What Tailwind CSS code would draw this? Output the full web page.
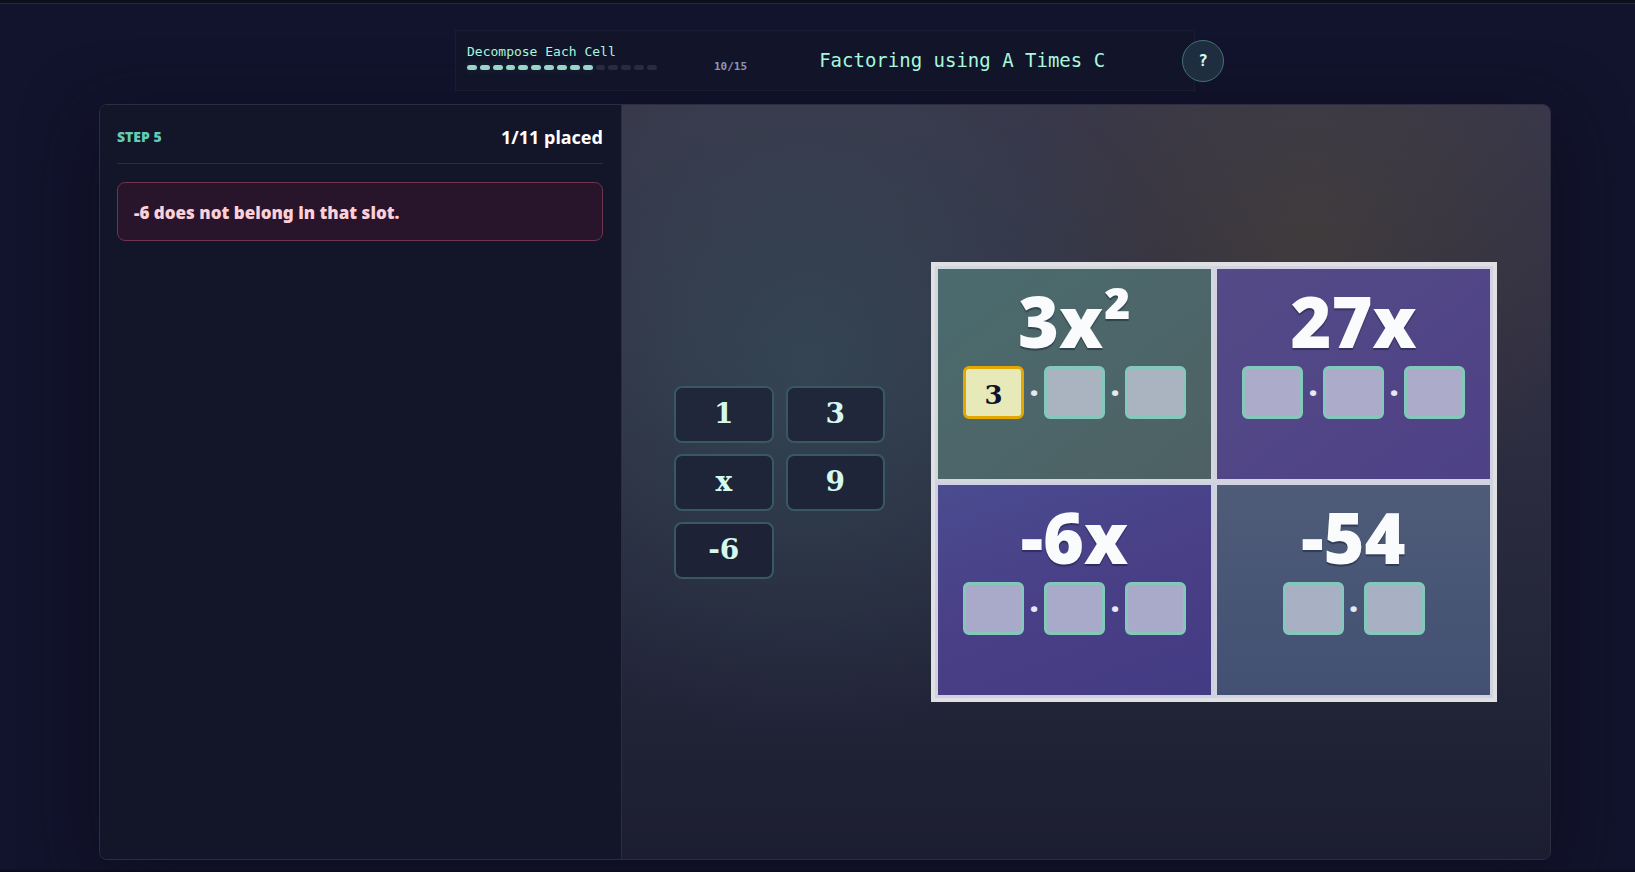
<!DOCTYPE html>
<html lang="en">

<head>
  <meta charset="UTF-8" />
  <meta name="viewport" content="width=device-width, initial-scale=1.0" />
  <title>Factoring using A Times C</title>
  <script src="https://cdn.jsdelivr.net/npm/@tailwindcss/browser@4"></script>
</head>

<body class="flex min-h-screen flex-col overflow-x-hidden bg-[#12132c] font-['Noto_Sans',sans-serif] text-white">

  <div class="h-1 border-b border-[#292a38] bg-[#0e0f1d]"></div>

  <main class="flex flex-1 flex-col pt-[26px] pr-[84px] pb-[10px] pl-[99px]">

    <header class="relative z-10 mx-auto flex h-[61px] w-[740px] items-center border border-[#1b1c31] bg-[#121429] pl-[11px] font-['DejaVu_Sans_Mono',monospace]">
      <div class="mb-1.5 flex items-end gap-[57px]">
        <div class="w-[190px]">
          <p class="text-[13px] leading-5 text-[#a7f8dd]">Decompose Each Cell</p>
          <div id="steps" class="mt-[3px] mb-1 flex gap-[3px]"></div>
        </div>
        <p class="text-[11px] leading-[14px] font-bold text-[#9095b5]">10/15</p>
      </div>
      <h1 class="ml-[72px] text-[19px] text-[#a7f8dd]">Factoring using A Times C</h1>
      <button type="button" aria-label="Help" class="absolute top-[9px] -right-[30px] h-[42px] w-[42px] rounded-full border border-[#3f7373] bg-[#1f2d40] text-base font-bold text-[#d6fbef]">?</button>
    </header>

    <div class="mt-[13px] flex flex-1 overflow-hidden rounded-lg border border-[#2c2d40] shadow-[0_18px_70px_rgba(12,12,26,0.6)]">

      <!-- step panel -->
      <aside class="w-[36%] border-r border-[#2c2d40] bg-[#131529] pr-[18px] pl-[17px]">
        <div class="flex h-[59px] items-center justify-between border-b border-[#2c2d40] pt-1.5">
          <p class="text-sm font-black text-[#63cdb5]">STEP 5</p>
          <p class="text-lg font-bold">1/11 placed</p>
        </div>
        <p role="alert" class="mt-[18px] flex h-[59px] items-center rounded-lg border border-[#6f3450] bg-[#28152c] px-4 pt-0.5 text-[17px] font-black text-[#fbd0d8]">-6 does not belong in that slot.</p>
      </aside>

      <!-- board panel -->
      <section class="flex flex-1 items-center gap-[46px] bg-[radial-gradient(circle_at_20%_35%,rgba(56,90,98,0.5),transparent_42%),radial-gradient(circle_at_74%_18%,rgba(80,70,45,0.4),transparent_32%),linear-gradient(180deg,#38374a_0%,#302f43_35%,#24263a_70%,#1c1d31_100%)] pr-[53px] pl-[52px]">

        <div class="grid w-[211px] shrink-0 grid-cols-2 gap-x-3 gap-y-[11px] font-['DejaVu_Serif',serif] text-[28px] leading-none font-bold text-[#d4f9ee]">
          <button type="button" class="h-[57px] rounded-lg border-2 border-[#37595f] bg-[#20273a]">1</button>
          <button type="button" class="h-[57px] rounded-lg border-2 border-[#37595f] bg-[#20273a]">3</button>
          <button type="button" class="h-[57px] rounded-lg border-2 border-[#37595f] bg-[#1f2539]">x</button>
          <button type="button" class="h-[57px] rounded-lg border-2 border-[#37595f] bg-[#1f2539]">9</button>
          <button type="button" class="h-[57px] rounded-lg border-2 border-[#37595f] bg-[#1d2236]">-6</button>
        </div>

        <div class="grid flex-1 grid-cols-2 border-4 border-[#dfdfe4] font-['Open_Sans',sans-serif]">
          <div class="flex h-[216px] flex-col items-center border-[3px] border-[#d0d8dc] bg-linear-to-br from-[#4a6b6e] to-[#4e6164] pt-[17px]">
            <p class="text-[70px] leading-none font-extrabold text-[#fafbfd] text-shadow-[0_2px_1px_rgba(15,23,42,0.45)]">3x²</p>
            <div class="mt-[10px] flex items-center">
              <button type="button" aria-label="Filled slot" class="h-[53px] w-[61px] rounded-md border-3 border-[#e3a700] bg-[#e7e9b8] pt-1 font-['DejaVu_Serif',serif] text-[26px] leading-none font-bold text-[#101229]">3</button>
              <span class="w-5 text-center text-3xl leading-none font-black text-[#e6e8f2]">·</span>
              <button type="button" aria-label="Empty slot" class="h-[53px] w-[61px] rounded-md border-3 border-[#84c8bc] bg-[#aab4c0]"></button>
              <span class="w-5 text-center text-3xl leading-none font-black text-[#e6e8f2]">·</span>
              <button type="button" aria-label="Empty slot" class="h-[53px] w-[61px] rounded-md border-3 border-[#84c8bc] bg-[#aab4c0]"></button>
            </div>
          </div>

          <div class="flex h-[216px] flex-col items-center border-[3px] border-[#d3d2e3] bg-linear-to-br from-[#544a87] to-[#4e4186] pt-[17px]">
            <p class="text-[70px] leading-none font-extrabold text-[#fafbfd] text-shadow-[0_2px_1px_rgba(15,23,42,0.45)]">27x</p>
            <div class="mt-[10px] flex items-center">
              <button type="button" aria-label="Empty slot" class="h-[53px] w-[61px] rounded-md border-3 border-[#84c8bc] bg-[#acabc9]"></button>
              <span class="w-5 text-center text-3xl leading-none font-black text-[#e6e8f2]">·</span>
              <button type="button" aria-label="Empty slot" class="h-[53px] w-[61px] rounded-md border-3 border-[#84c8bc] bg-[#acabc9]"></button>
              <span class="w-5 text-center text-3xl leading-none font-black text-[#e6e8f2]">·</span>
              <button type="button" aria-label="Empty slot" class="h-[53px] w-[61px] rounded-md border-3 border-[#84c8bc] bg-[#acabc9]"></button>
            </div>
          </div>

          <div class="flex h-[216px] flex-col items-center border-[3px] border-[#d1d0e2] bg-linear-160 from-[#4a4b90] via-[#493f87] to-[#433b83] pt-[17px]">
            <p class="text-[70px] leading-none font-extrabold text-[#fafbfd] text-shadow-[0_2px_1px_rgba(15,23,42,0.45)]">-6x</p>
            <div class="mt-[10px] flex items-center">
              <button type="button" aria-label="Empty slot" class="h-[53px] w-[61px] rounded-md border-3 border-[#84c8bc] bg-[#a9aaca]"></button>
              <span class="w-5 text-center text-3xl leading-none font-black text-[#e6e8f2]">·</span>
              <button type="button" aria-label="Empty slot" class="h-[53px] w-[61px] rounded-md border-3 border-[#84c8bc] bg-[#a9aaca]"></button>
              <span class="w-5 text-center text-3xl leading-none font-black text-[#e6e8f2]">·</span>
              <button type="button" aria-label="Empty slot" class="h-[53px] w-[61px] rounded-md border-3 border-[#84c8bc] bg-[#a9aaca]"></button>
            </div>
          </div>

          <div class="flex h-[216px] flex-col items-center border-[3px] border-[#d0d4df] bg-linear-to-b from-[#4e5c78] to-[#435073] pt-[17px]">
            <p class="text-[70px] leading-none font-extrabold text-[#fafbfd] text-shadow-[0_2px_1px_rgba(15,23,42,0.45)]">-54</p>
            <div class="mt-[10px] flex items-center">
              <button type="button" aria-label="Empty slot" class="h-[53px] w-[61px] rounded-md border-3 border-[#84c8bc] bg-[#a8b0c4]"></button>
              <span class="w-5 text-center text-3xl leading-none font-black text-[#e6e8f2]">·</span>
              <button type="button" aria-label="Empty slot" class="h-[53px] w-[61px] rounded-md border-3 border-[#84c8bc] bg-[#a8b0c4]"></button>
            </div>
          </div>
        </div>
      </section>
    </div>
  </main>

  <div class="h-0.5 bg-[#0c0b1d]"></div>

  <script>
    const done = 10;
    const total = 15;
    const steps = document.getElementById("steps");

    for (let i = 0; i < total; i++) {
      const bar = document.createElement("span");
      bar.className = i < done
        ? "h-[5px] flex-1 rounded-full bg-[#98d6c7] shadow-[0_0_10px_rgba(94,234,212,0.15)]"
        : "h-[5px] flex-1 rounded-full bg-[#2a2b43]";
      steps.appendChild(bar);
    }
  </script>
</body>

</html>
